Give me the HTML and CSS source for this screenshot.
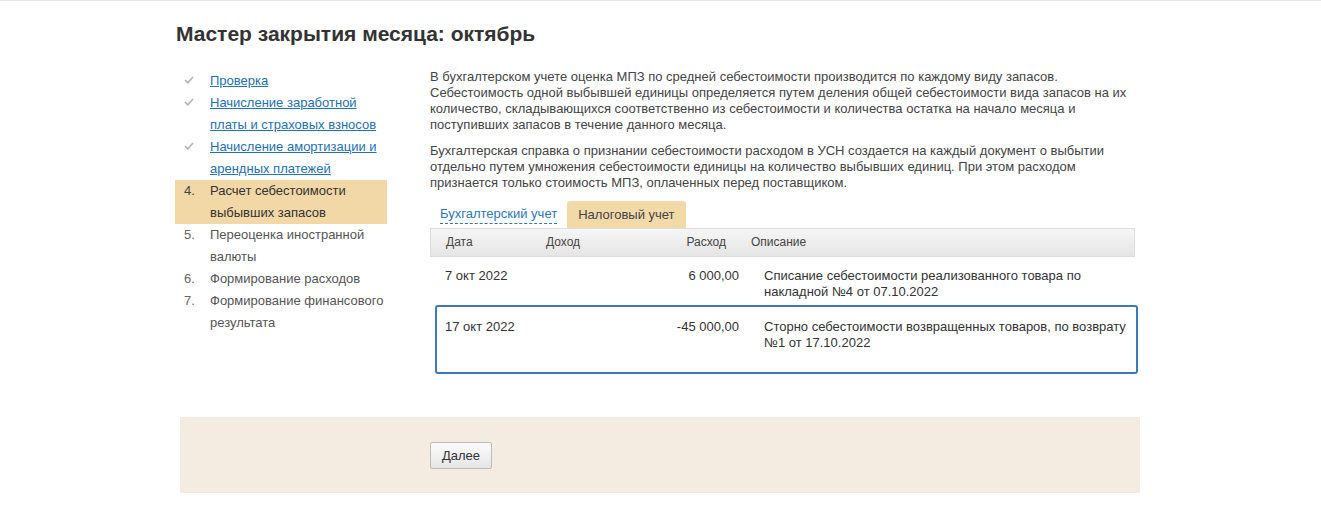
FILE: index.html
```html
<!DOCTYPE html>
<html lang="ru">
<head>
<meta charset="utf-8">
<title>Мастер закрытия месяца</title>
<link rel="stylesheet" href="styles.css">
</head>
<body>
<div class="topline"></div>
<div class="page">
  <h1 class="title">Мастер закрытия месяца: октябрь</h1>
  <div class="layout">
    <ol class="steps">
      <li class="step done"><span class="mark"><svg width="10" height="8" viewBox="0 0 10 8"><polyline points="1,4 3.8,6.8 9,1" fill="none" stroke="#b3b3b3" stroke-width="1.6"/></svg></span><a href="#">Проверка</a></li>
      <li class="step done"><span class="mark"><svg width="10" height="8" viewBox="0 0 10 8"><polyline points="1,4 3.8,6.8 9,1" fill="none" stroke="#b3b3b3" stroke-width="1.6"/></svg></span><a href="#">Начисление заработной платы и страховых взносов</a></li>
      <li class="step done"><span class="mark"><svg width="10" height="8" viewBox="0 0 10 8"><polyline points="1,4 3.8,6.8 9,1" fill="none" stroke="#b3b3b3" stroke-width="1.6"/></svg></span><a href="#">Начисление амортизации и арендных платежей</a></li>
      <li class="step current"><span class="mark">4.</span><span class="label">Расчет себестоимости выбывших запасов</span></li>
      <li class="step"><span class="mark">5.</span><span class="label">Переоценка иностранной валюты</span></li>
      <li class="step"><span class="mark">6.</span><span class="label">Формирование расходов</span></li>
      <li class="step"><span class="mark">7.</span><span class="label">Формирование финансового результата</span></li>
    </ol>
    <div class="content">
      <p class="para">В бухгалтерском учете оценка МПЗ по средней себестоимости производится по каждому виду запасов. Себестоимость одной выбывшей единицы определяется путем деления общей себестоимости вида запасов на их количество, складывающихся соответственно из себестоимости и количества остатка на начало месяца и поступивших запасов в течение данного месяца.</p>
      <p class="para">Бухгалтерская справка о признании себестоимости расходом в УСН создается на каждый документ о выбытии отдельно путем умножения себестоимости единицы на количество выбывших единиц. При этом расходом признается только стоимость МПЗ, оплаченных перед поставщиком.</p>
      <div class="tabs">
        <a class="tab" href="#">Бухгалтерский учет</a>
        <span class="tab active">Налоговый учет</span>
      </div>
      <div class="table">
        <div class="thead">
          <span>Дата</span>
          <span>Доход</span>
          <span class="num">Расход</span>
          <span>Описание</span>
        </div>
        <div class="row">
          <span>7 окт 2022</span>
          <span></span>
          <span class="num">6 000,00</span>
          <span>Списание себестоимости реализованного товара по накладной №4 от 07.10.2022</span>
        </div>
        <div class="row selected">
          <span>17 окт 2022</span>
          <span></span>
          <span class="num">-45 000,00</span>
          <span>Сторно себестоимости возвращенных товаров, по возврату №1 от 17.10.2022</span>
        </div>
      </div>
    </div>
  </div>
  <div class="footer">
    <button class="btn" type="button">Далее</button>
  </div>
</div>
</body>
</html>
```

FILE: styles.css
```css
html, body {
  margin: 0;
  padding: 0;
  background: #ffffff;
}
body {
  font-family: "Liberation Sans", Arial, sans-serif;
  font-size: 13px;
  color: #333333;
}
.topline {
  height: 1px;
  background: #e4e8ee;
}
.page {
  width: 965px;
  margin-left: 175px;
}
.title {
  margin: 0;
  padding: 20px 0 0 1px;
  font-size: 21px;
  line-height: 26px;
  font-weight: bold;
  color: #333333;
}
.layout {
  display: flex;
  margin-top: 22px;
}
.steps {
  list-style: none;
  margin: 1px 0 0 0;
  padding: 0;
  width: 212px;
  flex: none;
}
.step {
  display: flex;
  line-height: 22px;
  color: #555555;
}
.step .mark {
  flex: none;
  width: 35px;
  padding-left: 9px;
  box-sizing: border-box;
  color: #666666;
}
.step.done .mark svg {
  vertical-align: 1px;
}
.step a {
  color: #2270b8;
  text-decoration: underline;
}
.step.current {
  background: #f2d7a7;
  color: #333333;
}
.step.current .mark {
  color: #444444;
}
.content {
  margin-left: 43px;
  width: 710px;
}
.para {
  margin: 0 0 10px 0;
  line-height: 16px;
  color: #444444;
}
.tabs {
  display: flex;
  align-items: flex-end;
  margin-top: 8px;
  height: 27px;
}
.tab {
  line-height: 27px;
  padding: 0 11px;
  color: #444444;
}
a.tab {
  padding: 0;
  color: #2b77c0;
  text-decoration: none;
  line-height: 18px;
  border-bottom: 1px dashed #2b77c0;
  margin: 0 10px 4px 10px;
}
.tab.active {
  background: #f2d9a8;
  border-radius: 3px 3px 0 0;
}
.table {
  width: 705px;
}
.thead, .row {
  display: grid;
  align-items: start;
}
.thead {
  grid-template-columns: 100px 100px 80px 1fr;
  height: 27px;
  line-height: 27px;
  padding-left: 15px;
  border: 1px solid #dddddd;
  background: linear-gradient(#f6f6f6, #e5e5e5);
  color: #444444;
  font-size: 12px;
}
.thead .num {
  text-align: right;
}
.thead span:last-child {
  padding-left: 25px;
}
.row {
  grid-template-columns: 100px 100px 94px 1fr;
  padding-left: 15px;
  line-height: 16px;
  padding-top: 10px;
  color: #333333;
  margin-top: 1px;
  height: 35px;
}
.row .num {
  text-align: right;
}
.row span:last-child {
  padding-left: 25px;
}
.row.selected {
  margin-left: 5px;
  margin-right: -3px;
  padding-left: 8px;
  padding-top: 12px;
  height: 53px;
  border: 2px solid #3b79bb;
  border-radius: 3px;
  margin-top: 2px;
}
.footer {
  margin-top: 43px;
  margin-left: 5px;
  width: 960px;
  height: 76px;
  background: #f4ece0;
  padding: 25px 0 0 250px;
  box-sizing: border-box;
}
.btn {
  font-family: "Liberation Sans", Arial, sans-serif;
  font-size: 13px;
  color: #333333;
  width: 62px;
  height: 27px;
  border: 1px solid #bcbcbc;
  border-radius: 2px;
  background: linear-gradient(#fbfbfb, #e6e6e6);
  padding: 0;
}
```
